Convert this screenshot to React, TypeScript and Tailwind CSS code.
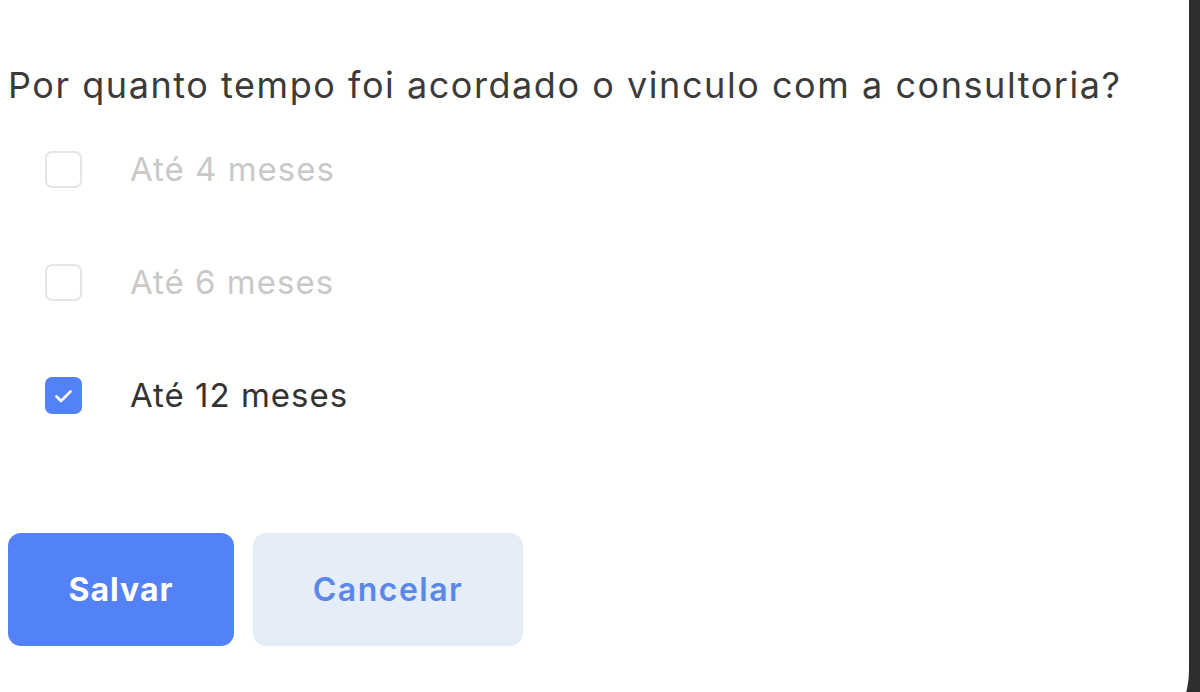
import React, { useState } from "react";

const options = ["Até 4 meses", "Até 6 meses", "Até 12 meses"];

const CheckIcon = () => (
  <svg width="37" height="37" viewBox="0 0 37 37" fill="none">
    <path
      d="M11.5 19.5l4.5 4.5 9.5-9.5"
      stroke="white"
      strokeWidth="2.6"
      strokeLinecap="round"
      strokeLinejoin="round"
    />
  </svg>
);

const App = () => {
  // selected period
  const [selected, setSelected] = useState(2);

  return (
    <div className="h-[692px] w-full overflow-hidden bg-[#2e2e2e] flex">
      <div
        className="w-[1189px] h-[760px] shrink-0 bg-white rounded-br-[90px] pl-[8px] pt-[63px]"
        style={{ fontFamily: 'Inter, "Noto Sans", sans-serif' }}
      >
        {/* question */}
        <h2 className="text-[36px] leading-[44px] tracking-[1.55px] text-[#3b3b3b]">
          Por quanto tempo foi acordado o vinculo com a consultoria?
        </h2>

        {/* options */}
        <div className="mt-[44px] flex flex-col gap-[76px]">
          {options.map((label, index) => {
            const checked = selected === index;
            return (
              <button
                key={label}
                onClick={() => setSelected(index)}
                className="flex items-center h-[37px] text-left pl-[37px]"
              >
                <span
                  className={
                    checked
                      ? "w-[37px] h-[37px] rounded-[7px] bg-[#5282f3] flex items-center justify-center"
                      : "w-[37px] h-[37px] rounded-[7px] border-2 border-[#e6e6e6] bg-white"
                  }
                >
                  {checked && <CheckIcon />}
                </span>
                <span
                  className={
                    checked
                      ? "ml-[48px] text-[33px] tracking-[1px] text-[#333333]"
                      : "ml-[48px] text-[33px] tracking-[1px] text-[#c9c9c9]"
                  }
                >
                  {label}
                </span>
              </button>
            );
          })}
        </div>

        {/* actions */}
        <div className="mt-[119px] flex gap-[19px]">
          <button className="w-[226px] h-[113px] rounded-[13px] bg-[#5282f5] text-white text-[32px] font-bold tracking-[1px]">
            Salvar
          </button>
          <button className="w-[270px] h-[113px] rounded-[13px] bg-[#e5edf9] text-[#5a87ea] text-[32px] font-semibold tracking-[1.5px]">
            Cancelar
          </button>
        </div>
      </div>
    </div>
  );
};

export default App;
